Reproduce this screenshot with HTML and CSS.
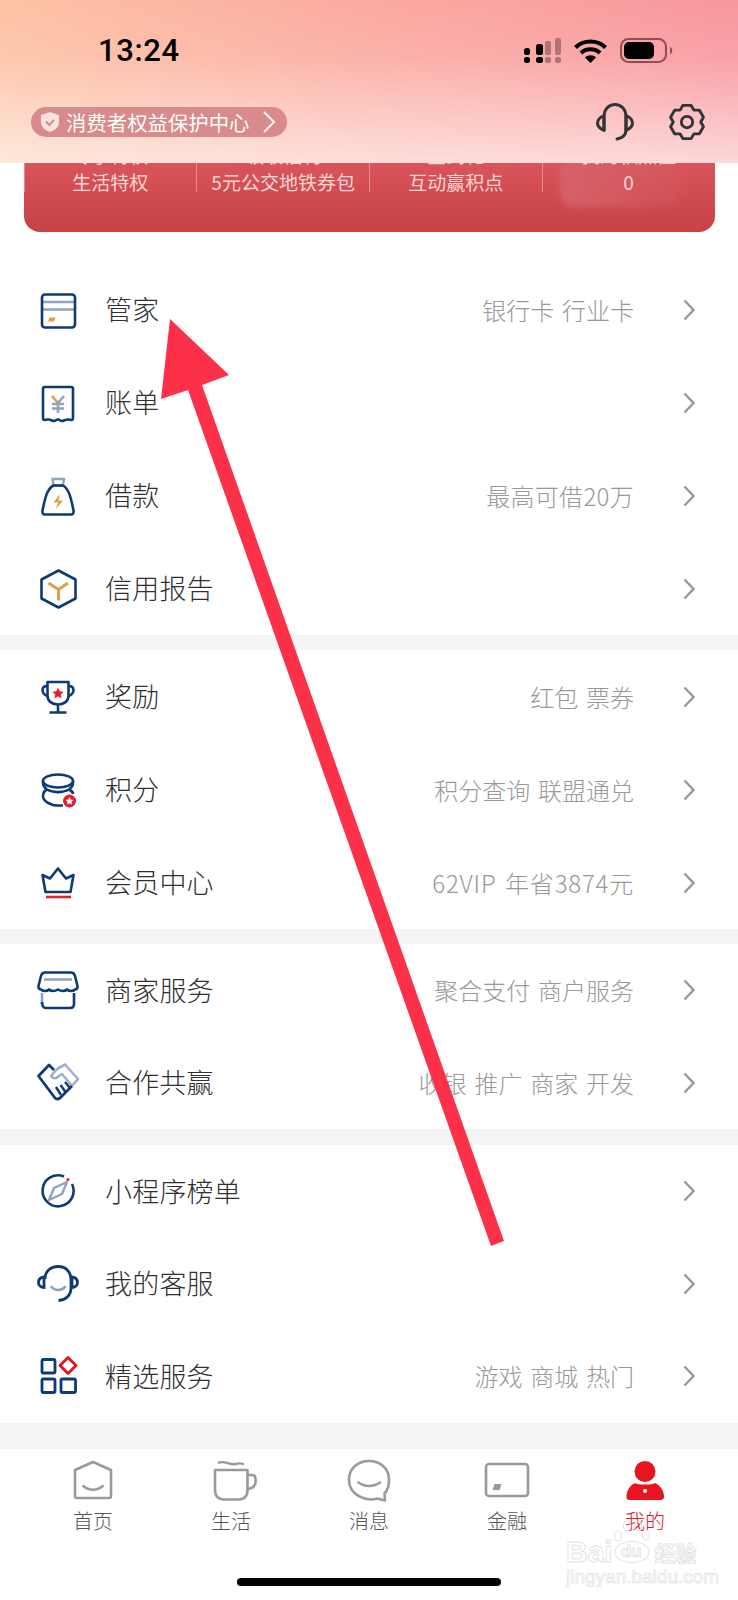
FILE: index.html
```html
<!DOCTYPE html>
<html lang="zh-CN">
<head>
  <meta charset="UTF-8" />
  <meta name="viewport" content="width=device-width, initial-scale=1" />
  <title>我的</title>
  <link rel="stylesheet" href="styles.css">
</head>
<body>
  <div class="phone">
    <header class="top">
      <div class="status">
        <span class="clock">13:24</span>
        <div class="status-icons">
          <svg width="37" height="25" viewBox="0 0 37 25">
            <g fill="#000">
              <rect x="0" y="10" width="6" height="7" rx="2.5"/>
              <rect x="12" y="6" width="7" height="11" rx="2.5"/>
              <rect x="0" y="19" width="6" height="6" rx="2.5"/>
              <rect x="12" y="19" width="7" height="6" rx="2.5"/>
            </g>
            <g fill="#000" opacity=".3">
              <rect x="21" y="3" width="6" height="14" rx="2"/>
              <rect x="31" y="0" width="6" height="17" rx="2"/>
              <rect x="21" y="19" width="6" height="6" rx="2"/>
              <rect x="31" y="19" width="6" height="6" rx="2"/>
            </g>
          </svg>
          <svg width="33" height="25" viewBox="0 0 33 25">
            <path d="M1.500 9.500C9.500 1.500 23.500 1.500 31.500 9.500M7 15C12 10 21 10 26 15" fill="none" stroke="#000" stroke-width="4.200"/>
            <path d="M11 19.500C14 16.500 19 16.500 22 19.500L16.500 25Z" fill="#000"/>
          </svg>
          <svg width="54" height="25" viewBox="0 0 54 25">
            <rect x="1" y="1" width="45" height="23" rx="7.500" fill="none" stroke="#8b4f55" stroke-width="2"/>
            <rect x="4" y="4" width="30" height="17" rx="5" fill="#000"/>
            <path d="M50 9C53 10 53 15 50 16Z" fill="#8b4f55"/>
          </svg>
        </div>
      </div>
      <div class="toolbar">
        <div class="rights-pill">
          <svg width="24" height="24" viewBox="0 0 24 24">
            <path d="M12 2L21 5V12C21 17 17 20.500 12 22C7 20.500 3 17 3 12V5Z" fill="#f5e3e2"/>
            <path d="M8 11.500L11.500 15L16 10" fill="none" stroke="#d98a8a" stroke-width="2"/>
          </svg>
          <span>消费者权益保护中心</span>
          <svg width="14" height="24" viewBox="0 0 14 24">
            <path d="M2 2L12 12L2 22" fill="none" stroke="#fbeeee" stroke-width="2.200"/>
          </svg>
        </div>
        <div class="tool-icons">
          <svg width="38" height="38" viewBox="0 0 38 38">
            <path d="M8 27V14C8 6 13 1.500 19 1.500C25 1.500 30 6 30 14V27C30 32 26 35 21 36" fill="none" stroke="#333" stroke-width="3" stroke-linecap="round"/>
            <path d="M8 12.500C3.500 14.500 1.500 17 1.500 20C1.500 23 3.500 25.500 8 27.500Z" fill="none" stroke="#333" stroke-width="3" stroke-linejoin="round"/>
            <path d="M30 12.500C34.500 14.500 36.500 17 36.500 20C36.500 23 34.500 25.500 30 27.500Z" fill="none" stroke="#333" stroke-width="3" stroke-linejoin="round"/>
          </svg>
          <svg width="38" height="38" viewBox="-1 -1 40 40">
            <path d="M14.650 1.530H23.350L26.250 6.440H31.950L36.300 14.040L33.500 19L36.300 23.960L31.950 31.500H26.250L23.350 36.470H14.650L11.750 31.560H6.050L1.700 23.960L4.500 19L1.700 14.040L6.050 6.500H11.750Z" fill="none" stroke="#333" stroke-width="3" stroke-linejoin="round"/>
            <circle cx="19" cy="19" r="6" fill="none" stroke="#333" stroke-width="3"/>
          </svg>
        </div>
      </div>
    </header>

    <section class="perks">
      <div class="perks-blur"></div>
      <div class="perk"><span class="perk-cut">专享特权</span>生活特权</div>
      <div class="perk"><span class="perk-cut">领取福利</span>5元公交地铁券包</div>
      <div class="perk"><span class="perk-cut">签到礼</span>互动赢积点</div>
      <div class="perk"><span class="perk-cut">我的积点值</span>0</div>
    </section>

    <div class="menu-group first">
      <a class="menu-row">
        <svg class="row-icon" viewBox="0 0 44 44">
          <path d="M6 14H39M6 21.500H39" stroke="#8ea3c2" stroke-width="2.500" fill="none"/>
          <rect x="6" y="6.500" width="33" height="33" rx="3" fill="none" stroke="#0e3a75" stroke-width="2.600"/>
          <path d="M13.500 29.500H19.500L18 33.500H12Z" fill="#d9a24a"/>
        </svg>
        <span class="row-title">管家</span>
        <span class="row-sub">银行卡 行业卡</span>
        <svg class="chevron" viewBox="0 0 12 22"><path d="M1.500 1.500L10.500 11L1.500 20.500"/></svg>
      </a>
      <a class="menu-row">
        <svg class="row-icon" viewBox="0 0 44 44">
          <path d="M7 37V8Q7 6 9 6H35Q37 6 37 8V37C37 40 34 39 32 38.500C30 38 28 40 26 40C24 40 24 38.500 22 38.500C20 38.500 20 40 18 40C16 40 14 38 12 38.500C10 39 7 40 7 37Z" fill="none" stroke="#0e3a75" stroke-width="2.600"/>
          <path d="M16 15L22 22" stroke="#d9a24a" stroke-width="2.600" fill="none"/>
          <path d="M28 15L22 22V32M16 23H28M16 27.500H28" stroke="#8ea3c2" stroke-width="2.600" fill="none"/>
        </svg>
        <span class="row-title">账单</span>
        <svg class="chevron" viewBox="0 0 12 22"><path d="M1.500 1.500L10.500 11L1.500 20.500"/></svg>
      </a>
      <a class="menu-row">
        <svg class="row-icon" viewBox="0 0 44 44">
          <path d="M16.500 5H28L27 11.500H17.500Z" fill="none" stroke="#8ea3c2" stroke-width="2.400" stroke-linejoin="round"/>
          <path d="M17.500 11.500H27C33 15 35 24 37.500 36.500Q38 40.500 35 40.500H9Q6 40.500 6.500 36.500C9 24 11 15 17.500 11.500Z" fill="none" stroke="#0e3a75" stroke-width="2.600" stroke-linejoin="round"/>
          <path d="M24 20L17.500 28.500H22L20 35L27 26.500H22.500Z" fill="#d9a24a"/>
        </svg>
        <span class="row-title">借款</span>
        <span class="row-sub latin">最高可借20万</span>
        <svg class="chevron" viewBox="0 0 12 22"><path d="M1.500 1.500L10.500 11L1.500 20.500"/></svg>
      </a>
      <a class="menu-row">
        <svg class="row-icon" viewBox="0 0 44 44">
          <path d="M22.500 3.500L39.500 12.500V31.500L22.500 40.500L5.500 31.500V12.500Z" fill="none" stroke="#0e3a75" stroke-width="2.600" stroke-linejoin="round"/>
          <path d="M12.500 16L22.500 22.500L32 16M22.500 22.500V33.500" fill="none" stroke="#d9a24a" stroke-width="3"/>
        </svg>
        <span class="row-title">信用报告</span>
        <svg class="chevron" viewBox="0 0 12 22"><path d="M1.500 1.500L10.500 11L1.500 20.500"/></svg>
      </a>
    </div>

    <div class="menu-group">
      <a class="menu-row">
        <svg class="row-icon" viewBox="0 0 44 44">
          <path d="M11.500 7H32.500V21C32.500 26 28 29.500 22 29.500C16 29.500 11.500 26 11.500 21Z" fill="none" stroke="#0e3a75" stroke-width="2.600" stroke-linejoin="round"/>
          <path d="M11.500 11C8 11 6.500 12.500 6.500 15C6.500 18 8.500 20 11.500 21M32.500 11C36 11 37.500 12.500 37.500 15C37.500 18 35.500 20 32.500 21M22 29.500V37.500M13.500 37.500H30.500" fill="none" stroke="#0e3a75" stroke-width="2.600"/>
          <path d="M22 12.500L23.700 16.300L27.800 16.700L24.700 19.400L25.600 23.400L22 21.300L18.400 23.400L19.300 19.400L16.200 16.700L20.300 16.300Z" fill="#e3202e"/>
        </svg>
        <span class="row-title">奖励</span>
        <span class="row-sub">红包 票券</span>
        <svg class="chevron" viewBox="0 0 12 22"><path d="M1.500 1.500L10.500 11L1.500 20.500"/></svg>
      </a>
      <a class="menu-row">
        <svg class="row-icon" viewBox="0 0 44 44">
          <ellipse cx="22" cy="13" rx="15" ry="6.500" fill="none" stroke="#0e3a75" stroke-width="2.600"/>
          <path d="M7 13V15C7 18 9 20 11 21.500C8 23 7 25 7 28C7 33 14 37.500 22 37.500H27M11 21.500C17 25 27 25 33 21.500C35 20 37 18 37 15V13" fill="none" stroke="#0e3a75" stroke-width="2.600"/>
          <path d="M33 21.500C36 23 37 25 37 26" fill="none" stroke="#0e3a75" stroke-width="2.600"/>
          <circle cx="33.500" cy="33" r="6.500" fill="#e3202e"/>
          <path d="M33.500 29L34.700 31.600L37.500 31.900L35.400 33.800L36 36.600L33.500 35.200L31 36.600L31.600 33.800L29.500 31.900L32.300 31.600Z" fill="#fff"/>
        </svg>
        <span class="row-title">积分</span>
        <span class="row-sub">积分查询 联盟通兑</span>
        <svg class="chevron" viewBox="0 0 12 22"><path d="M1.500 1.500L10.500 11L1.500 20.500"/></svg>
      </a>
      <a class="menu-row">
        <svg class="row-icon" viewBox="0 0 44 44">
          <path d="M6.500 14L14 17.500L22 7.500L30 17.500L37.500 14L34.500 31H9.500Z" fill="none" stroke="#0e3a75" stroke-width="2.600" stroke-linejoin="round"/>
          <path d="M10 36H35" stroke="#e3202e" stroke-width="2.600" fill="none"/>
        </svg>
        <span class="row-title">会员中心</span>
        <span class="row-sub wide">62VIP 年省3874元</span>
        <svg class="chevron" viewBox="0 0 12 22"><path d="M1.500 1.500L10.500 11L1.500 20.500"/></svg>
      </a>
    </div>

    <div class="menu-group tight">
      <a class="menu-row">
        <svg class="row-icon" viewBox="0 0 44 44">
          <path d="M6 25V36" stroke="#8ea3c2" stroke-width="2.600" fill="none"/>
          <path d="M6 34Q6 40 10 40H34Q38 40 38 36V25" stroke="#0e3a75" stroke-width="2.600" fill="none"/>
          <path d="M8 11.500H36" stroke="#8ea3c2" stroke-width="2.500" fill="none"/>
          <path d="M9 4.500H35Q38 4.500 39 8L41.500 18Q42 21 39 21.500C37 23.500 33 23.500 31 21.500C29 23.500 25 23.500 22 21.500C19 23.500 15 23.500 13 21.500C11 23.500 7 23.500 5 21.500Q2 21 2.500 18L5 8Q6 4.500 9 4.500Z" fill="none" stroke="#0e3a75" stroke-width="2.600" stroke-linejoin="round"/>
        </svg>
        <span class="row-title">商家服务</span>
        <span class="row-sub">聚合支付 商户服务</span>
        <svg class="chevron" viewBox="0 0 12 22"><path d="M1.500 1.500L10.500 11L1.500 20.500"/></svg>
      </a>
      <a class="menu-row">
        <svg class="row-icon" viewBox="0 0 44 44">
          <path d="M21 8L29 3.500L42 18L36 25M21 8L15 15C17 18 20 18 23 15L26 13L36 25" fill="none" stroke="#9fb0c8" stroke-width="2.600" stroke-linejoin="round"/>
          <path d="M18 9L13 4L2.500 15L19 37Q21 39 24 37L36 25" fill="none" stroke="#0e3a75" stroke-width="2.800" stroke-linejoin="round"/>
          <path d="M20 26L25 34M24.500 24L29.500 31M29 21L34 27" fill="none" stroke="#0e3a75" stroke-width="2.400"/>
        </svg>
        <span class="row-title">合作共赢</span>
        <span class="row-sub">收银 推广 商家 开发</span>
        <svg class="chevron" viewBox="0 0 12 22"><path d="M1.500 1.500L10.500 11L1.500 20.500"/></svg>
      </a>
    </div>

    <div class="menu-group tight last">
      <a class="menu-row">
        <svg class="row-icon" viewBox="0 0 44 44">
          <path d="M28 7.500A15.500 15.500 0 1 0 36 15" fill="none" stroke="#0e3a75" stroke-width="2.600"/>
          <circle cx="32" cy="10.500" r="1.600" fill="#e3202e"/>
          <path d="M31 13L26 25L13 31L18 19Z" fill="none" stroke="#8ea3c2" stroke-width="2.400" stroke-linejoin="round"/>
        </svg>
        <span class="row-title">小程序榜单</span>
        <svg class="chevron" viewBox="0 0 12 22"><path d="M1.500 1.500L10.500 11L1.500 20.500"/></svg>
      </a>
      <a class="menu-row">
        <svg class="row-icon" viewBox="0 0 44 44">
          <path d="M9 17C9 9 15 4.500 22 4.500C30 4.500 35 10 35 18V26C35 33 30 38 22.500 38.500" fill="none" stroke="#0e3a75" stroke-width="2.800"/>
          <path d="M8 15C4 15.500 2.500 18 2.500 20.500C2.500 23 4 25 8 25.500ZM36 15C40 15.500 41.500 18 41.500 20.500C41.500 23 40 25 36 25.500Z" fill="none" stroke="#0e3a75" stroke-width="2.800"/>
          <path d="M15.500 25C19 29 25 29 29 25" fill="none" stroke="#8ea3c2" stroke-width="2.600" stroke-linecap="round"/>
        </svg>
        <span class="row-title">我的客服</span>
        <svg class="chevron" viewBox="0 0 12 22"><path d="M1.500 1.500L10.500 11L1.500 20.500"/></svg>
      </a>
      <a class="menu-row">
        <svg class="row-icon" viewBox="0 0 44 44">
          <g fill="none" stroke="#0e3a75" stroke-width="2.800">
            <rect x="6" y="5.500" width="13" height="13.500" rx="1.500"/>
            <rect x="6" y="25" width="13" height="13.500" rx="1.500"/>
            <rect x="25" y="25" width="14.500" height="13.500" rx="1.500"/>
          </g>
          <path d="M32 3.500L40 11.500L32 19.500L24 11.500Z" fill="none" stroke="#e3141f" stroke-width="2.800" stroke-linejoin="round"/>
        </svg>
        <span class="row-title">精选服务</span>
        <span class="row-sub">游戏 商城 热门</span>
        <svg class="chevron" viewBox="0 0 12 22"><path d="M1.500 1.500L10.500 11L1.500 20.500"/></svg>
      </a>
    </div>

    <nav class="tabs">
      <a class="tab">
        <svg viewBox="0 0 56 44" width="56" height="44">
          <path d="M10 12L28 4L46 12V38Q46 40 44 40H12Q10 40 10 38Z" fill="none" stroke="#9a9a9a" stroke-width="2.600" stroke-linejoin="round"/>
          <path d="M17.500 27.500Q28 36 38.500 27.500" fill="none" stroke="#9a9a9a" stroke-width="2.600"/>
        </svg>
        <span>首页</span>
      </a>
      <a class="tab">
        <svg viewBox="0 0 56 44" width="56" height="44">
          <path d="M15 5C21 1.500 27 8 33 6C36 5 38 5 41 6.500" fill="none" stroke="#9a9a9a" stroke-width="2.400"/>
          <path d="M12 12H44.500V32Q44.500 41.500 35 41.500H21.500Q12 41.500 12 32Z" fill="none" stroke="#9a9a9a" stroke-width="2.600" stroke-linejoin="round"/>
          <path d="M44.500 17H49Q52.500 17 52.500 21V24Q52.500 30 44.500 31" fill="none" stroke="#9a9a9a" stroke-width="2.600"/>
        </svg>
        <span>生活</span>
      </a>
      <a class="tab">
        <svg viewBox="0 0 56 44" width="56" height="44">
          <path d="M36 40.500C25 44 8 37 8 22C8 10 17 3 28 3C39 3 48 10 48 22C48 29 46 33 43.500 35.500L44 42.500Z" fill="none" stroke="#9a9a9a" stroke-width="2.600" stroke-linejoin="round"/>
          <path d="M16.500 24Q28 32 40 24" fill="none" stroke="#9a9a9a" stroke-width="2.600"/>
        </svg>
        <span>消息</span>
      </a>
      <a class="tab">
        <svg viewBox="0 0 56 44" width="56" height="44">
          <rect x="7" y="6" width="42" height="32" rx="3" fill="none" stroke="#9a9a9a" stroke-width="2.600"/>
          <path d="M15.500 26H22.500L20.500 32H13.500Z" fill="#9a9a9a"/>
        </svg>
        <span>金融</span>
      </a>
      <a class="tab active">
        <svg viewBox="0 0 56 44" width="56" height="44">
          <circle cx="28" cy="13.500" r="10.500" fill="#e8141f"/>
          <path d="M18 25C21 27 35 27 38 25C44 28 47 33 47 39Q47 42 43 42H13Q9 42 9.500 39C9.500 33 12 28 18 25Z" fill="#e8141f"/>
          <circle cx="28" cy="33" r="2" fill="#fff"/>
        </svg>
        <span>我的</span>
      </a>
    </nav>
    <div class="home-bar"></div>

    <div class="watermark">
      <svg class="paw" width="40" height="44" viewBox="0 0 40 44">
        <g fill="none" stroke="#e6e6e6" stroke-width="1.200">
          <ellipse cx="5" cy="16" rx="3.500" ry="5"/>
          <ellipse cx="14" cy="6" rx="3.500" ry="5"/>
          <ellipse cx="25" cy="6" rx="3.500" ry="5"/>
          <ellipse cx="33" cy="15" rx="3.500" ry="5"/>
          <ellipse cx="19" cy="32" rx="17" ry="10.500"/>
        </g>
      </svg>
      <div class="wm-brand"><span>Bai</span><span class="wm-du">du</span><span class="wm-cn">经验</span></div>
      <div class="wm-url">jingyan.baidu.com</div>
    </div>

    <svg class="arrow" width="738" height="1600" viewBox="0 0 738 1600">
      <path d="M170 319L229 375L202 385L504 1241L491 1246L188 390L161 399Z" fill="#fd3049"/>
    </svg>
  </div>
</body>
</html>
```

FILE: styles.css
```css
/* Reset and base */
* {
  box-sizing: border-box;
  margin: 0;
  padding: 0;
}
body, html {
  height: 100%;
  background: #fff;
  overflow: hidden;
  font-family: "Noto Sans CJK SC", "Noto Sans", sans-serif;
}
.phone {
  position: relative;
  width: 738px;
  height: 1600px;
  overflow: hidden;
  background: #fff;
}


/* Header with status bar */
.top {
  height: 163px;
  padding: 26px 32px 0 31px;
  background:
    linear-gradient(to bottom, rgba(255,255,255,0) 0%, rgba(255,255,255,0.1) 35%, rgba(255,255,255,0.62) 100%),
    linear-gradient(90deg, #fdc2a4 0%, #fbaaa0 50%, #f8979e 100%);
}
.status {
  display: flex;
  align-items: center;
  justify-content: space-between;
  height: 48px;
  padding: 0 0 0 67px;
  margin-right: 32px;
}
.clock {
  font-family: Roboto, Inter, sans-serif;
  font-size: 31px;
  font-weight: 500;
  color: #000;
  letter-spacing: 0.6px;
}
.status-icons {
  display: flex;
  align-items: center;
  gap: 13px;
}
.toolbar {
  display: flex;
  align-items: center;
  justify-content: space-between;
  margin-top: 29px;
}
.rights-pill {
  display: flex;
  align-items: center;
  width: 256px;
  height: 30px;
  padding: 0 0 0 7px;
  border-radius: 15px;
  background: #d98a8a;
  color: #fff;
}
.rights-pill span {
  margin: 0 12px 0 4px;
  font-size: 20.4px;
  line-height: 30px;
  white-space: nowrap;
}
.tool-icons {
  display: flex;
  gap: 34px;
}


/* Red perks card, cut off by the header */
.perks {
  position: relative;
  display: grid;
  grid-template-columns: repeat(4, 1fr);
  align-items: start;
  height: 69px;
  margin: 0 23.5px;
  border-radius: 0 0 16px 16px;
  background: linear-gradient(to bottom, #d9555b, #c64244);
  overflow: hidden;
}
.perk {
  position: relative;
  height: 29px;
  font-size: 19px;
  line-height: 28px;
  text-align: center;
  color: #f9d6d6;
  border-left: 1px solid #e58c8e;
  white-space: nowrap;
}
.perk:first-of-type {
  border-left: none;
}
.perk-cut {
  display: block;
  height: 24px;
  margin: -20px 0 1px;
  line-height: 24px;
}
.perks-blur {
  position: absolute;
  top: -6px;
  left: 536px;
  width: 122px;
  height: 50px;
  border-radius: 14px;
  background: linear-gradient(90deg, #d5626a, rgba(213, 98, 106, 0.2));
  filter: blur(3px);
}


/* Menu groups */
.menu-group {
  background: #fff;
  border-bottom: 15px solid #f4f4f4;
}
.menu-group.first {
  margin-top: 31px;
}
.menu-group.tight {
  border-bottom-width: 16px;
}
.menu-group.tight .menu-row {
  height: 92.5px;
}
.menu-group.last {
  border-bottom-width: 26.5px;
}
.menu-row {
  display: flex;
  align-items: center;
  height: 93px;
  padding: 0 43px 0 36px;
}
.row-icon {
  flex: none;
  width: 44px;
  height: 44px;
}
.row-title {
  margin-left: 25px;
  padding-bottom: 2px;
  font-size: 27px;
  font-weight: 300;
  letter-spacing: 0.2px;
  color: #303030;
  white-space: nowrap;
}
.row-sub {
  margin-left: auto;
  padding-bottom: 1px;
  font-size: 24px;
  font-weight: 300;
  word-spacing: 2.5px;
  color: #999;
  white-space: nowrap;
}
.row-sub.latin {
  letter-spacing: 0.3px;
}
.row-sub.wide {
  letter-spacing: 0.8px;
}
.chevron {
  flex: none;
  width: 12px;
  height: 22px;
  margin-left: 49px;
  fill: none;
  stroke: #999;
  stroke-width: 2.4;
}
.menu-row .row-title + .chevron {
  margin-left: auto;
}


/* Bottom tabs */
.tabs {
  display: grid;
  grid-template-columns: repeat(5, 138px);
  padding: 9px 24px 0 24px;
}
.tab {
  display: flex;
  flex-direction: column;
  align-items: center;
  font-size: 20px;
  font-weight: 300;
  line-height: 28px;
  color: #555;
}
.tab span {
  margin-top: 5px;
}
.tab.active {
  color: #d9202c;
}
.home-bar {
  width: 264px;
  height: 8px;
  margin: 43px auto 0;
  border-radius: 4px;
  background: #000;
}


/* Things lying over the page */
.arrow {
  position: absolute;
  top: 0;
  left: 0;
  pointer-events: none;
}
.watermark {
  position: absolute;
  left: 566px;
  top: 1520px;
  width: 136px;
  height: 66px;
}
.paw {
  position: absolute;
  top: 0;
  left: 47px;
}
.wm-brand {
  position: absolute;
  top: 16px;
  left: 0;
  display: flex;
  align-items: center;
  height: 32px;
  font-family: "Liberation Sans", sans-serif;
  font-size: 30px;
  line-height: 32px;
  font-weight: 700;
  white-space: nowrap;
  color: #fff;
  -webkit-text-stroke: 1px #e4e4e4;
}
.wm-du {
  margin-left: 8px;
  font-size: 17px;
}
.wm-cn {
  margin-left: 13px;
  font-family: "Noto Sans CJK SC", sans-serif;
  font-size: 21px;
}
.wm-url {
  position: absolute;
  top: 46px;
  left: 0;
  font-family: "Liberation Sans", sans-serif;
  font-size: 19px;
  line-height: 22px;
  color: #fff;
  -webkit-text-stroke: 0.7px #e2e2e2;
  white-space: nowrap;
}
```
